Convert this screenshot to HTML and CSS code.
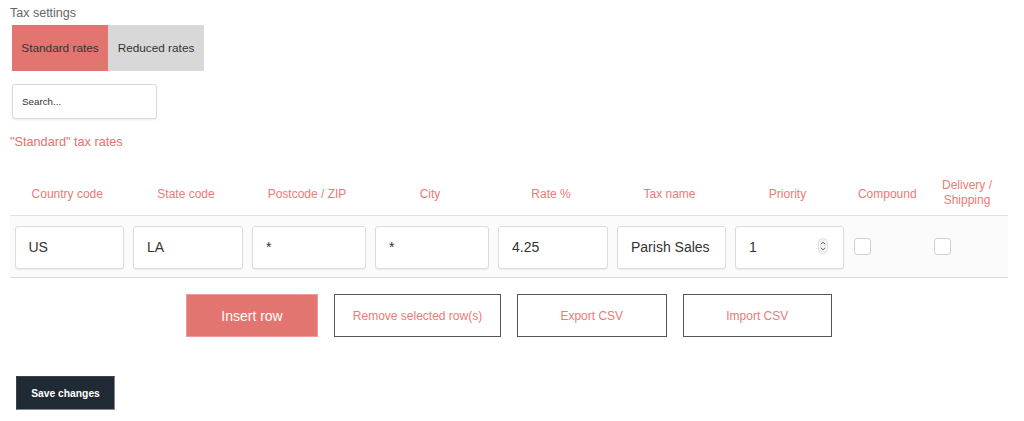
FILE: index.html
```html
<!DOCTYPE html>
<html lang="en">
<head>
<meta charset="utf-8">
<title>Tax settings</title>
<link rel="stylesheet" href="styles.css">
</head>
<body>
<div class="page">
  <div class="title">Tax settings</div>
  <div class="tabs">
    <button class="tab active">Standard rates</button>
    <button class="tab">Reduced rates</button>
  </div>
  <input class="search" type="text" placeholder="Search...">
  <h2 class="section">"Standard" tax rates</h2>

  <div class="table">
    <div class="row head">
      <div class="th shift">Country code</div>
      <div class="th shift">State code</div>
      <div class="th shift">Postcode / ZIP</div>
      <div class="th shift">City</div>
      <div class="th shift">Rate %</div>
      <div class="th shift">Tax name</div>
      <div class="th shift">Priority</div>
      <div class="th">Compound</div>
      <div class="th two">Delivery /<br>Shipping</div>
    </div>
    <div class="row body">
      <div class="td"><input class="field" type="text" value="US"></div>
      <div class="td"><input class="field" type="text" value="LA"></div>
      <div class="td"><input class="field" type="text" value="*"></div>
      <div class="td"><input class="field" type="text" value="*"></div>
      <div class="td"><input class="field" type="text" value="4.25"></div>
      <div class="td"><input class="field" type="text" value="Parish Sales"></div>
      <div class="td">
        <div class="numwrap">
          <input class="field" type="text" value="1">
          <svg class="spin" width="10" height="16" viewBox="0 0 10 16"><rect x="0.5" y="0.5" width="9" height="15" rx="4" fill="#f4f4f4" stroke="#e2e2e2"/><path d="M3 6.2 L5 4.2 L7 6.2" fill="none" stroke="#555" stroke-width="1"/><path d="M3 9.8 L5 11.8 L7 9.8" fill="none" stroke="#555" stroke-width="1"/></svg>
        </div>
      </div>
      <div class="td"><span class="check c1"></span></div>
      <div class="td"><span class="check c2"></span></div>
    </div>
  </div>

  <div class="actions">
    <button class="btn primary">Insert row</button>
    <button class="btn outline w-remove">Remove selected row(s)</button>
    <button class="btn outline w-csv">Export CSV</button>
    <button class="btn outline w-csv">Import CSV</button>
  </div>

  <button class="save">Save changes</button>
</div>
</body>
</html>
```
FILE: styles.css
```css
html, body {
  margin: 0;
  padding: 0;
  background: #ffffff;
}
body {
  font-family: "Liberation Sans", Arial, sans-serif;
  color: #333;
}
.page {
  padding: 0 16px 0 10px;
}
.title {
  font-size: 12.5px;
  line-height: 15px;
  color: #666;
  padding-top: 6px;
}
.tabs {
  display: flex;
  margin: 4px 0 0 2px;
}
.tab {
  width: 96px;
  height: 46px;
  border: 0;
  margin: 0;
  padding: 0;
  font-family: "Liberation Sans", Arial, sans-serif;
  font-size: 11.8px;
  color: #333;
  background: #d8d8d8;
}
.tab.active {
  background: #e37571;
}
.search {
  display: block;
  box-sizing: border-box;
  width: 145px;
  height: 35px;
  margin: 13px 0 0 2px;
  padding: 0 9px;
  border: 1px solid #dadada;
  border-radius: 3px;
  box-shadow: 0 1px 2px rgba(0,0,0,0.08);
  font-family: "Liberation Sans", Arial, sans-serif;
  font-size: 9.8px;
  color: #333;
  outline: none;
}
.search::placeholder {
  color: #333;
  opacity: 1;
}
.section {
  margin: 15px 0 0 0;
  font-size: 12.7px;
  line-height: 16px;
  font-weight: normal;
  color: #e4716d;
}
.table {
  margin-top: 20px;
  width: 998px;
}
.row {
  display: grid;
  grid-template-columns: 118.5px 119px 123px 123px 119px 118px 118px 77.5px 82px;
}
.row.head {
  height: 45px;
  align-items: center;
  border-bottom: 1px solid #e2e2e2;
}
.th {
  text-align: center;
  font-size: 12px;
  line-height: 15px;
  color: #ec7a76;
  padding-top: 3px;
}
.th.two {
  padding-top: 1px;
}
.th.shift {
  padding-right: 4px;
}
.row.body {
  height: 61px;
  align-items: center;
  background: #fbfbfb;
  border-bottom: 1px solid #dcdcdc;
}
.td {
  padding: 0 4.5px;
  display: flex;
  align-items: center;
}
.field {
  box-sizing: border-box;
  width: 100%;
  height: 43px;
  margin: 1px 0 0 0;
  padding: 0 12px 0 13px;
  border: 1px solid #dcdcdc;
  border-radius: 3px;
  background: #fff;
  box-shadow: 0 1px 1px rgba(0,0,0,0.06);
  font-family: "Liberation Sans", Arial, sans-serif;
  font-size: 14px;
  color: #333;
  outline: none;
}
.numwrap {
  position: relative;
  width: 100%;
}
.numwrap .spin {
  position: absolute;
  right: 16px;
  top: 13px;
}
.check {
  display: block;
  box-sizing: border-box;
  width: 17px;
  height: 17px;
  border: 1px solid #cfcfcf;
  border-radius: 3px;
  background: #fff;
}
.check.c1 {
  margin-left: 1px;
}
.check.c2 {
  margin-left: 3.5px;
}
.actions {
  width: 998px;
  display: flex;
  justify-content: center;
  gap: 16px;
  margin-top: 16px;
}
.btn {
  height: 43px;
  margin: 0;
  font-family: "Liberation Sans", Arial, sans-serif;
  padding: 0;
}
.btn.primary {
  width: 132px;
  border: 1px solid #f09a96;
  background: #e37571;
  color: #fff;
  font-size: 14px;
}
.btn.outline {
  background: #fff;
  border: 1px solid #555;
  color: #ec7a76;
  font-size: 12px;
}
.w-remove {
  width: 167px;
}
.w-csv {
  width: 149.5px;
}
.save {
  display: block;
  margin: 39px 0 0 6px;
  width: 99px;
  height: 34px;
  padding: 0;
  background: #1f2a35;
  border: 1px solid #858a90;
  border-top-color: #3a444e;
  border-left-color: #3a444e;
  color: #fff;
  font-family: "Liberation Sans", Arial, sans-serif;
  font-weight: bold;
  font-size: 10.3px;
}
```
